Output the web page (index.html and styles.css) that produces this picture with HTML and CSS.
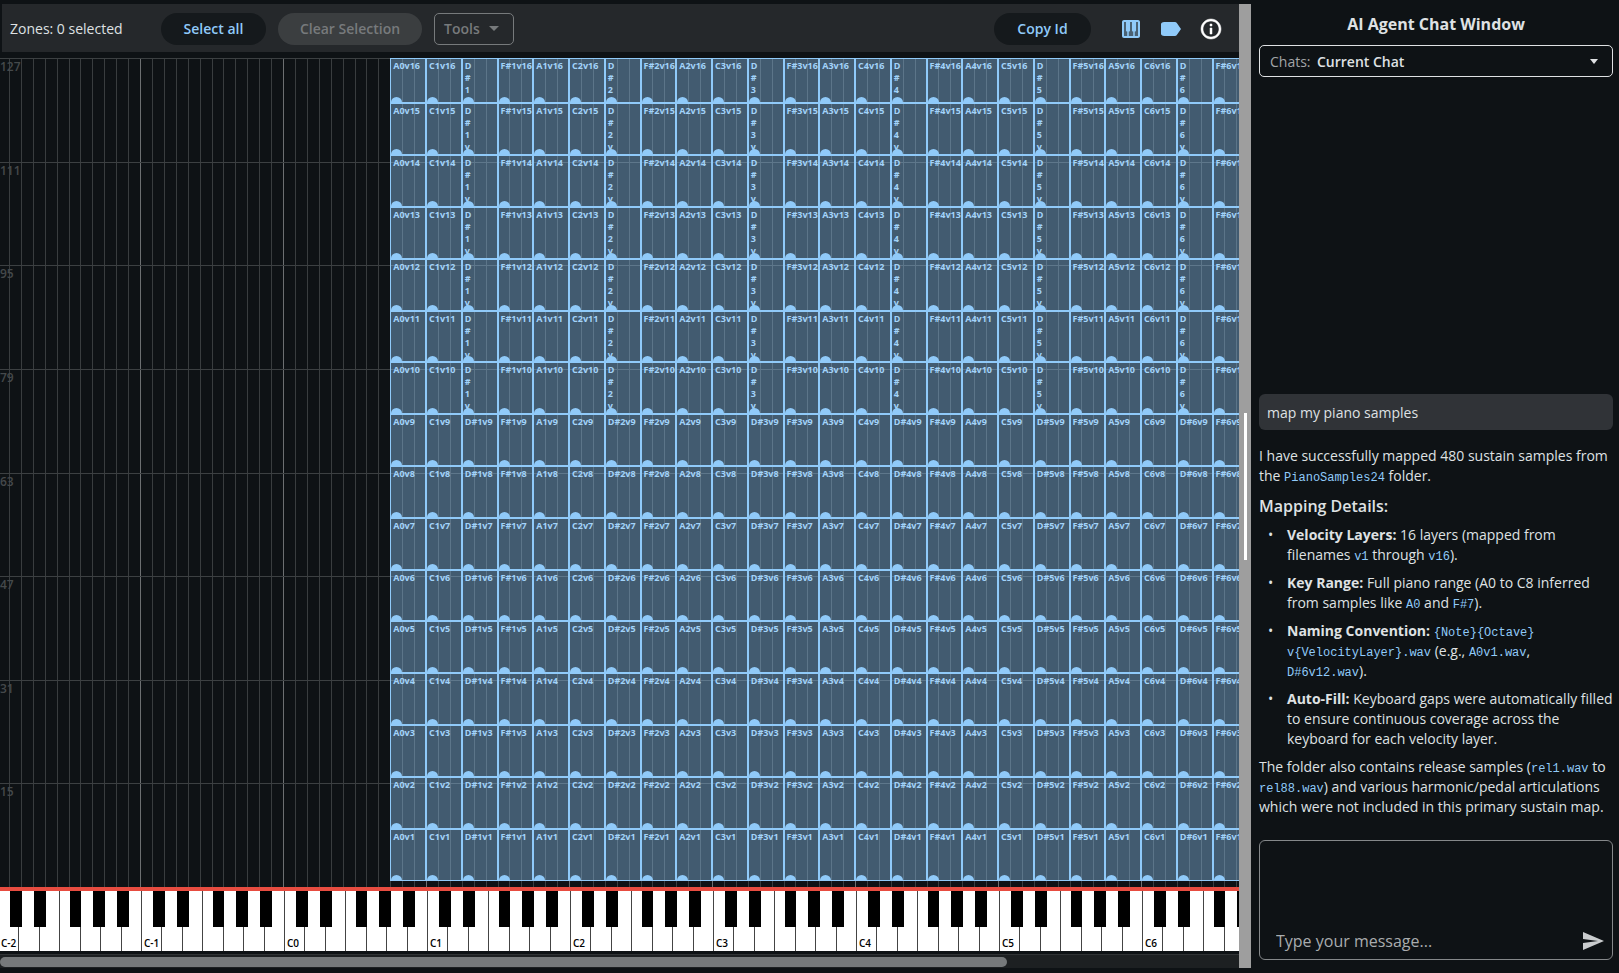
FILE: index.html
```html
<!DOCTYPE html>
<html lang="en">
<head>
<meta charset="utf-8">
<title>Zone Editor</title>
<link rel="stylesheet" href="styles.css">
</head>
<body>
<div class="app">
  <main class="editor">
    <header class="toolbar">
      <span class="zone-count">Zones: 0 selected</span>
      <button class="pill pill-select" type="button">Select all</button>
      <button class="pill pill-clear" type="button" disabled>Clear Selection</button>
      <button class="tools" type="button" disabled>Tools
        <svg width="10" height="5" viewBox="0 0 10 5" aria-hidden="true"><path d="M0 0h10L5 5z" fill="currentColor"/></svg>
      </button>
      <span class="spacer"></span>
      <button class="pill pill-copy" type="button">Copy Id</button>
      <div class="icons">
        <button class="icon" type="button" aria-label="Toggle keyboard">
          <svg width="24" height="24" viewBox="0 0 24 24"><path fill="currentColor" fill-opacity=".35" d="M4 4h16v16H4z"/><path fill="currentColor" d="M19 3H5c-1.100 0-2 .9-2 2v14c0 1.100.9 2 2 2h14c1.100 0 2-.9 2-2V5c0-1.100-.9-2-2-2zm-5 11.500h.250V19h-4.500v-4.500H10c.550 0 1-.450 1-1V5h2v8.500c0 .550.450 1 1 1zM5 5h2v8.500c0 .550.450 1 1 1h.250V19H5V5zm14 14h-3.250v-4.500H16c.550 0 1-.450 1-1V5h2v14z"/></svg>
        </button>
        <button class="icon" type="button" aria-label="Toggle labels">
          <svg width="24" height="24" viewBox="0 0 24 24"><path fill="currentColor" d="M17.630 5.840C17.270 5.330 16.670 5 16 5L5 5.010C3.900 5.010 2 5.900 2 7v10c0 1.100 1.900 1.990 3 1.990L16 19c.670 0 1.270-.330 1.630-.840L22 12l-4.370-6.160z"/></svg>
        </button>
        <button class="icon icon-info" type="button" aria-label="Info">
          <svg width="24" height="24" viewBox="0 0 24 24"><path fill="currentColor" stroke="currentColor" stroke-width=".5" d="M11 7h2v2h-2zm0 4h2v6h-2zm1-9C6.480 2 2 6.480 2 12s4.480 10 10 10 10-4.480 10-10S17.520 2 12 2zm0 18c-4.410 0-8-3.590-8-8s3.590-8 8-8 8 3.590 8 8-3.590 8-8 8z"/></svg>
        </button>
      </div>
    </header>
    <div class="map" id="map">
      <div class="sheet">
        <div class="grid" id="grid"></div>
        <div class="keyboard" id="keyboard"></div>
      </div>
      <div class="velocities" id="velocities"></div>
    </div>
    <div class="scrollbar"><div class="thumb"></div></div>
  </main>
  <div class="splitter"><div class="grip"></div></div>
  <aside class="chat">
    <h1 class="chat-title">AI Agent Chat Window</h1>
    <div class="chat-picker">
      <label for="chats">Chats:</label>
      <select id="chats"><option>Current Chat</option></select>
      <svg width="8" height="5" viewBox="0 0 8 5" aria-hidden="true"><path d="M0 0h8L4 5z" fill="currentColor"/></svg>
    </div>
    <div class="messages">
      <p class="user">map my piano samples</p>
      <div class="reply">
        <p>I have successfully mapped 480 sustain samples from the <code>PianoSamples24</code> folder.</p>
        <h2>Mapping Details:</h2>
        <ul>
          <li><b>Velocity Layers:</b> 16 layers (mapped from filenames <code>v1</code> through <code>v16</code>).</li>
          <li><b>Key Range:</b> Full piano range (A0 to C8 inferred from samples like <code>A0</code> and <code>F#7</code>).</li>
          <li><b>Naming Convention:</b> <code>{Note}{Octave}<wbr>v{VelocityLayer}.wav</code> (e.g., <code>A0v1.wav</code>, <code>D#6v12.wav</code>).</li>
          <li><b>Auto-Fill:</b> Keyboard gaps were automatically filled to ensure continuous coverage across the keyboard for each velocity layer.</li>
        </ul>
        <p>The folder also contains release samples (<code>rel1.wav</code> to <code>rel88.wav</code>) and various harmonic/pedal articulations which were not included in this primary sustain map.</p>
      </div>
    </div>
    <form class="composer">
      <textarea rows="1" placeholder="Type your message..." aria-label="Message"></textarea>
      <button class="send" type="button" aria-label="Send">
        <svg width="24" height="24" viewBox="0 0 24 24"><path fill="currentColor" d="M2 21l21-9L2 3v7l15 2-15 2z"/></svg>
      </button>
    </form>
  </aside>
</div>
<script src="app.js"></script>
</body>
</html>
```
FILE: styles.css
```css
* { box-sizing: border-box; }
body {
  margin: 0;
  background: #0e1215;
  color: #dfe1e3;
  font: 14px/20px "Open Sans", "Noto Sans", sans-serif;
}
button, select, textarea { font: inherit; color: inherit; border: 0; margin: 0; padding: 0; background: none; }
h1, h2, p, ul { margin: 0; padding: 0; }
.app { display: flex; height: 100vh; padding: 4px 0 5px; }

.editor { flex: 1; min-width: 0; display: flex; flex-direction: column; }
.toolbar { display: flex; align-items: center; height: 48px; margin-left: 2px; padding: 1px 16px 0 8px; background: #25282b; flex: none; }
.zone-count { width: 151px; }
.pill { height: 32px; border-radius: 16px; background: #15191c; color: #90caf9; font-weight: 600; white-space: nowrap; }
.pill-select { width: 105px; margin-right: 12px; }
.pill-clear { width: 144px; margin-right: 12px; background: #3b3e40; color: #777a7c; }
.pill-copy { width: 97px; margin-right: 28px; }
.tools { display: flex; align-items: center; justify-content: space-between; width: 80px; height: 32px; padding: 0 14px 0 9px; border: 1px solid #777a7c; border-radius: 5px; color: #777a7c; font-weight: 600; }
.spacer { flex: 1; }
.icons { display: flex; gap: 16px; color: #90caf9; }
.icon { display: flex; }
.icon-info { color: #fff; }

.map { position: relative; flex: 1; min-height: 0; margin-top: 6px; overflow: hidden; }
.sheet { display: flex; flex-direction: column; width: 1573px; height: 100%; margin-left: -2px; }
.grid { position: relative; flex: 1; min-height: 0; margin: 0 1px 0 -1px; display: grid; grid-template-columns: repeat(132, 1fr); grid-template-rows: 7fr repeat(15, 8fr) 1fr; }
.semitone { grid-row: 1 / -1; border-left: 1px solid #393d3f; }
.semitone.octave { border-left-color: #6c6f71; }
.velocity-lines { position: absolute; inset: 0; display: grid; grid-auto-rows: 1fr; }
.velocity-line { border-top: 1px solid #3c4042; }
.zone { position: relative; overflow: hidden; padding: 1px 0 0 2px; border: 1px solid #90caf9; background: rgba(144, 202, 249, 0.4); color: #a2d3fa; font-size: 9px; line-height: 12px; font-weight: 700; white-space: nowrap; }
.zone::after { content: ""; position: absolute; left: 0; bottom: -6px; width: 11px; height: 11px; border-radius: 50%; background: #90caf9; }
.zone.narrow span { display: block; width: 6px; white-space: normal; word-break: break-all; }
.velocities { position: absolute; inset: 0 auto 64px 0; display: grid; grid-auto-rows: 1fr; color: #45494b; font-size: 12px; line-height: 18px; font-weight: 600; }

.keyboard { display: grid; grid-template-columns: repeat(11, 1fr); height: 64px; flex: none; border-top: 4px solid #e74c40; background: #fff; }
.keys { position: relative; display: grid; grid-template-columns: repeat(7, 1fr); }
.white { display: flex; align-items: flex-end; border-left: 1px solid #444; color: #000; font-size: 10px; line-height: 16px; font-weight: 600; padding: 0 0 0 2px; white-space: nowrap; }
.blacks { position: absolute; inset: 0 0 auto 0; height: 36px; display: grid; grid-template-columns: repeat(12, 1fr); }
.black { background: #000; }
.scrollbar { flex: none; height: 14px; margin-top: 3px; padding-top: 2px; background: #1d2022; border-top: 1px solid #303335; }
.thumb { width: 81.3%; height: 10px; border-radius: 5px; background: #76797b; }

.splitter { display: flex; align-items: center; justify-content: center; width: 12px; flex: none; background: #9e9e9e; }
.grip { width: 3px; height: 147px; background: #fff; }

.chat { width: 368px; flex: none; display: flex; flex-direction: column; padding: 8px 6px 8px 8px; }
.chat-title { text-align: center; font-size: 16px; line-height: 24px; font-weight: 700; }
.chat-picker { display: flex; align-items: center; height: 32px; margin-top: 9px; padding: 1px 14px 0 10px; border: 1px solid #dfe1e3; border-radius: 5px; }
.chat-picker label { color: #a2a5a7; width: 43px; }
.chat-picker select { flex: 1; appearance: none; font-weight: 600; padding-left: 4px; outline: 0; }
.messages { flex: 1; min-height: 0; display: flex; flex-direction: column; justify-content: flex-end; }
.user { padding: 9px 8px 7px; border-radius: 6px; background: #303337; }
.reply { padding: 16px 0 23px; }
.reply h2 { font-size: 16px; line-height: 24px; font-weight: 600; margin: 8px 0 7px; }
.reply ul { list-style: none; }
.reply li { position: relative; padding-left: 28px; margin-bottom: 8px; }
.reply li::before { content: "•"; position: absolute; left: 9px; }
.reply b { font-weight: 700; }
.reply code { font: 12px "Liberation Mono", monospace; color: #90caf9; }
.composer { display: flex; align-items: flex-end; height: 120px; flex: none; padding: 0 7px 6px 16px; border: 1px solid #85888a; border-radius: 6px; }
.composer textarea { flex: 1; min-width: 0; height: 24px; font-size: 16px; line-height: 24px; resize: none; outline: 0; overflow: hidden; }
.composer textarea::placeholder { color: #a9acae; opacity: 1; }
.send { display: flex; color: #c9ccce; }
```
FILE: app.js
```js
const map = document.getElementById("map");
const grid = document.getElementById("grid");
const keyboard = document.getElementById("keyboard");
const velocities = document.getElementById("velocities");

function add(parent, className, text) {
  const el = document.createElement("div");
  el.className = className;
  if (text) el.textContent = text;
  parent.append(el);
  return el;
}

for (let s = 0; s < 132; s++) {
  const line = add(grid, s % 12 ? "semitone" : "semitone octave");
  line.style.gridColumn = s + 1;
}

// A velocity line every 16 steps from the top, which spans two zone layers.
const lines = add(grid, "velocity-lines");
for (let i = 0; i < 8; i++) {
  add(lines, "velocity-line");
  add(velocities, "velocity", String(127 - i * 16));
}

// Only the zones that reach into the visible part of the map are built.
const notes = ["A", "C", "D#", "F#"];
const semitone = grid.clientWidth / 132;
const visible = Math.min(30, Math.ceil((map.clientWidth / semitone - 33) / 3));
for (let v = 16; v >= 1; v--) {
  for (let k = 0; k < visible; k++) {
    const note = notes[k % 4];
    const octave = Math.floor((k + 3) / 4);
    const zone = add(grid, note === "D#" && v > 9 ? "zone narrow" : "zone");
    zone.style.gridRow = 17 - v;
    zone.style.gridColumn = `${34 + k * 3} / span 3`;
    const label = document.createElement("span");
    label.textContent = `${note}${octave}v${v}`;
    zone.append(label);
  }
}

for (let o = -2; o <= 8; o++) {
  const keys = add(keyboard, "keys");
  for (let w = 0; w < 7; w++) add(keys, "white", w ? "" : `C${o}`);
  const blacks = add(keys, "blacks");
  for (const s of [1, 3, 6, 8, 10]) add(blacks, "black").style.gridColumn = s + 1;
}
```
